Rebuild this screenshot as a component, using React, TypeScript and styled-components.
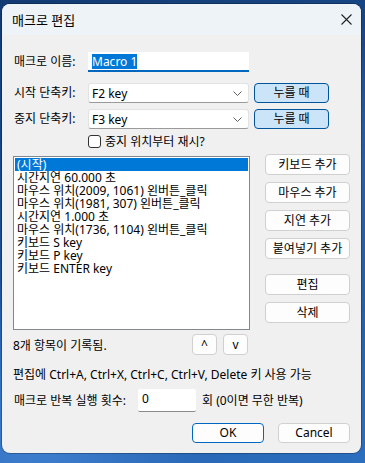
import React from 'react';
import styled, { createGlobalStyle } from 'styled-components';

const Global = createGlobalStyle`
  html, body { margin: 0; padding: 0; }
  body {
    width: 365px;
    height: 463px;
    overflow: hidden;
    background:
      radial-gradient(circle at 10% 95%, #3f7fd0 0, transparent 30%),
      radial-gradient(circle at 90% 40%, #2a63ad 0, transparent 35%),
      linear-gradient(160deg, #123a72 0%, #1d5399 50%, #2c6fbf 100%);
    font-family: "Noto Sans", "Noto Sans CJK KR", sans-serif;
    font-size: 12px;
    color: #000;
  }
  * { box-sizing: border-box; }
`;

const Window = styled.div`
  margin: 4px 0 0 2px;
  width: 359px;
  height: 449px;
  border-radius: 8px;
  overflow: hidden;
  background: #f0f0f0;
  display: flex;
  flex-direction: column;
  box-shadow: 0 0 0 1px rgba(0, 0, 0, 0.25);
`;

const TitleBar = styled.div`
  height: 31px;
  background: #eef3f8;
  display: flex;
  align-items: center;
  justify-content: space-between;
  padding: 0 9px 0 10px;
`;

const Title = styled.span`
  font-size: 13px;
  line-height: 16px;
`;

const Body = styled.div`
  flex: 1;
  padding: 17px 11px 0 11px;
  display: flex;
  flex-direction: column;
`;

const FieldRow = styled.div<{ $mt?: number }>`
  display: flex;
  align-items: center;
  height: 20px;
  margin-top: ${(p) => p.$mt ?? 0}px;
`;

const Label = styled.span<{ $w?: number }>`
  width: ${(p) => p.$w ?? 75}px;
  padding-left: 1px;
  flex: none;
  line-height: 16px;
  white-space: nowrap;
`;

const NameInput = styled.div`
  width: 161px;
  height: 20px;
  background: #fff;
  border-bottom: 2px solid #0067c0;
  display: flex;
  align-items: center;
  padding-left: 4px;
`;

const Selected = styled.span`
  background: #0078d7;
  color: #fff;
  line-height: 15px;
`;

const Combo = styled.div`
  width: 161px;
  height: 20px;
  background: #fff;
  border: 1px solid #e2e2e2;
  border-bottom-color: #9a9a9a;
  border-radius: 3px;
  display: flex;
  align-items: center;
  justify-content: space-between;
  padding: 0 6px 0 3px;
`;

const Button = styled.button<{ $accent?: 'press' | 'default'; $w?: number; $h?: number; $ml?: number }>`
  width: ${(p) => p.$w ?? 85}px;
  height: ${(p) => p.$h ?? 21}px;
  margin-left: ${(p) => p.$ml ?? 0}px;
  flex: none;
  font: inherit;
  font-size: 12px;
  line-height: 14px;
  padding: 0;
  color: #000;
  border-radius: 4px;
  background: ${(p) => (p.$accent === 'press' ? '#cce4f7' : '#fdfdfd')};
  border: 1px solid
    ${(p) => (p.$accent === 'press' ? '#005499' : p.$accent === 'default' ? '#0067c0' : '#d0d0d0')};
  display: flex;
  align-items: center;
  justify-content: center;
`;

const CheckRow = styled.div`
  display: flex;
  align-items: center;
  margin: 6px 0 0 75px;
  height: 13px;
`;

const CheckBox = styled.span`
  width: 13px;
  height: 13px;
  border: 1px solid #333;
  border-radius: 3px;
  background: #fff;
`;

const CheckLabel = styled.span`
  margin-left: 4px;
  line-height: 14px;
`;

const Main = styled.div`
  display: flex;
  margin-top: 6px;
`;

const ListBox = styled.div`
  margin-top: 2px;
  width: 237px;
  height: 174px;
  border: 1px solid #828790;
  background: #fff;
  padding: 1px;
  display: flex;
  flex-direction: column;
`;

const Item = styled.div<{ $sel?: boolean }>`
  height: 13px;
  line-height: 13px;
  padding-left: 2px;
  white-space: nowrap;
  background: ${(p) => (p.$sel ? '#0078d7' : 'transparent')};
  color: ${(p) => (p.$sel ? '#fff' : '#000')};
`;

const ButtonCol = styled.div`
  margin-left: 15px;
  display: flex;
  flex-direction: column;
  gap: 7px;
`;

const Spacer = styled.div<{ $h: number }>`
  height: ${(p) => p.$h}px;
`;

const ListFooter = styled.div`
  width: 235px;
  margin-top: 4px;
  display: flex;
  align-items: center;
  justify-content: space-between;
`;

const ArrowGroup = styled.div`
  display: flex;
  gap: 6px;
`;

const Text = styled.div<{ $mt?: number }>`
  margin-top: ${(p) => p.$mt ?? 0}px;
  line-height: 16px;
  white-space: nowrap;
`;

const RepeatRow = styled.div`
  display: flex;
  align-items: center;
  margin-top: 6px;
  height: 23px;
`;

const CountInput = styled.div`
  width: 58px;
  height: 23px;
  background: #fff;
  border-bottom: 1px solid #8a8a8a;
  border-radius: 2px;
  padding: 3px 0 0 4px;
  line-height: 14px;
`;

const After = styled.span`
  margin-left: 6px;
  line-height: 16px;
`;

const DialogButtons = styled.div`
  display: flex;
  justify-content: flex-end;
  gap: 14px;
  margin-top: 11px;
`;

const Chevron = () => (
  <svg width="9" height="5" viewBox="0 0 9 5">
    <path d="M0.5 0.5 L4.5 4.5 L8.5 0.5" fill="none" stroke="#606060" strokeWidth="1" />
  </svg>
);

const CloseIcon = () => (
  <svg width="11" height="11" viewBox="0 0 11 11">
    <path d="M0.5 0.5 L10.5 10.5 M10.5 0.5 L0.5 10.5" stroke="#222" strokeWidth="1.1" />
  </svg>
);

const items = [
  '(시작)',
  '시간지연 60.000 초',
  '마우스 위치(2009, 1061) 왼버튼_클릭',
  '마우스 위치(1981, 307) 왼버튼_클릭',
  '시간지연 1.000 초',
  '마우스 위치(1736, 1104) 왼버튼_클릭',
  '키보드 S key',
  '키보드 P key',
  '키보드 ENTER key',
];

export default function App() {
  return (
    <>
      <Global />
      <Window>
        <TitleBar>
          <Title>매크로 편집</Title>
          <CloseIcon />
        </TitleBar>
        <Body>
          <FieldRow>
            <Label>매크로 이름:</Label>
            <NameInput>
              <Selected>Macro 1</Selected>
            </NameInput>
          </FieldRow>
          <FieldRow $mt={11}>
            <Label>시작 단축키:</Label>
            <Combo>
              <span>F2 key</span>
              <Chevron />
            </Combo>
            <Button $accent="press" $w={75} $h={20} $ml={5}>
              누를 때
            </Button>
          </FieldRow>
          <FieldRow $mt={6}>
            <Label>중지 단축키:</Label>
            <Combo>
              <span>F3 key</span>
              <Chevron />
            </Combo>
            <Button $accent="press" $w={75} $h={20} $ml={5}>
              누를 때
            </Button>
          </FieldRow>
          <CheckRow>
            <CheckBox />
            <CheckLabel>중지 위치부터 재시?</CheckLabel>
          </CheckRow>
          <Main>
            <ListBox>
              {items.map((t, i) => (
                <Item key={i} $sel={i === 0}>
                  {t}
                </Item>
              ))}
            </ListBox>
            <ButtonCol>
              <Button>키보드 추가</Button>
              <Button>마우스 추가</Button>
              <Button>지연 추가</Button>
              <Button>붙여넣기 추가</Button>
              <Spacer $h={1} />
              <Button>편집</Button>
              <Button>삭제</Button>
            </ButtonCol>
          </Main>
          <ListFooter>
            <span>8개 항목이 기록됨.</span>
            <ArrowGroup>
              <Button $w={25} $h={21}>^</Button>
              <Button $w={25} $h={21}>v</Button>
            </ArrowGroup>
          </ListFooter>
          <Text $mt={12}>편집에 Ctrl+A, Ctrl+X, Ctrl+C, Ctrl+V, Delete 키 사용 가능</Text>
          <RepeatRow>
            <Label $w={125}>매크로 반복 실행 횟수:</Label>
            <CountInput>0</CountInput>
            <After>회 (0이면 무한 반복)</After>
          </RepeatRow>
          <DialogButtons>
            <Button $accent="default" $w={72} $h={20}>OK</Button>
            <Button $w={72} $h={20}>Cancel</Button>
          </DialogButtons>
        </Body>
      </Window>
    </>
  );
}
